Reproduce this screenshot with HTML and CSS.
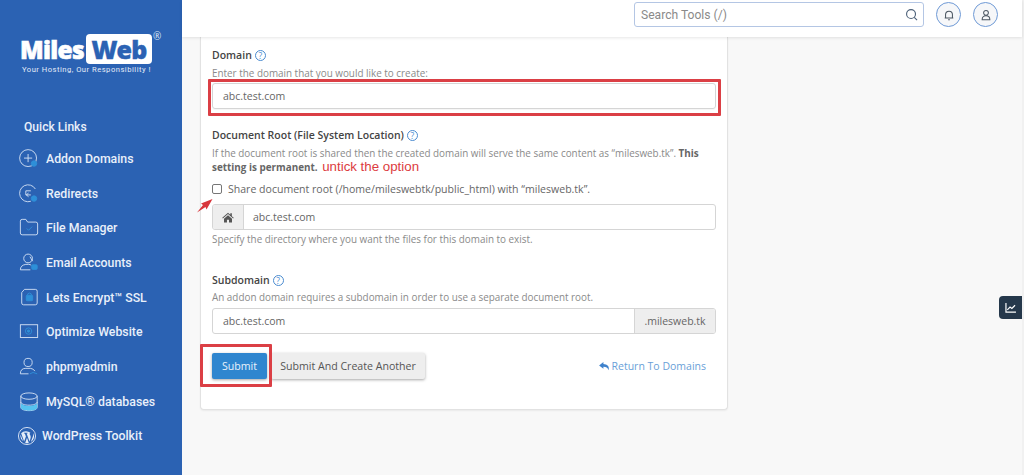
FILE: index.html
```html
<!DOCTYPE html>
<html lang="en">
<head>
<meta charset="utf-8">
<title>Create Addon Domain</title>
<link rel="stylesheet" href="styles.css">
</head>
<body>
<div class="app">
  <aside class="sidebar">
    <div class="logo">
      <div class="logo-mark"><span class="logo-miles">Miles</span><span class="logo-web">Web</span><span class="logo-reg">®</span></div>
      <div class="logo-tag">Your Hosting, Our Responsibility !</div>
    </div>
    <div class="quick">Quick Links</div>
    <nav class="nav">
      <a class="nav-item"><svg class="ico" viewBox="0 0 22 22"><circle cx="10" cy="10" r="9.3"/><path d="M10 5.500v9M5.500 10h9"/><circle class="dot" cx="16.500" cy="16" r="3"/></svg>Addon Domains</a>
      <a class="nav-item"><svg class="ico" viewBox="0 0 22 22"><path d="M18 5.500A9.300 9.300 0 1 0 13 19"/><path d="M13 7.500H7.500v4.500H13M10.500 10l-2.500 2 2.500 2"/><circle class="dot" cx="16.500" cy="16" r="3"/></svg>Redirects</a>
      <a class="nav-item"><svg class="ico" viewBox="0 0 22 22"><path d="M1.500 3.500q0-2 2-2h4l2 3h9q2 0 2 2v10q0 2-2 2h-15q-2 0-2-2z"/><path class="acc" d="M8.500 11.500l2 2 4-4"/></svg>File Manager</a>
      <a class="nav-item"><svg class="ico" viewBox="0 0 22 22"><circle cx="10" cy="6" r="4.800"/><path d="M12 4l3 5M1.500 18.500q0-5 6-6h3q2 0 3 1M1.500 18.500h11"/><rect class="dot" x="14" y="13" width="6" height="5" rx="1"/></svg>Email Accounts</a>
      <a class="nav-item"><svg class="ico" viewBox="0 0 22 22"><path d="M6 1.500h12q2 0 2 2v13q0 2-2 2H5q-2 0-2-2V5z"/><rect class="dot" x="8" y="8" width="7" height="6" rx="1"/><path class="acc" d="M9.500 8V6.500q2-2 4 0V8"/></svg>Lets Encrypt™ SSL</a>
      <a class="nav-item"><svg class="ico" viewBox="0 0 22 22"><rect x="1.500" y="3" width="19" height="14"/><circle class="acc" cx="10.500" cy="10" r="3.500"/><circle class="dot" cx="10.500" cy="10" r="1.300"/></svg>Optimize Website</a>
      <a class="nav-item"><svg class="ico" viewBox="0 0 22 22"><circle cx="10" cy="6" r="4.500"/><path d="M1.500 18.500q0-6 6-6h5q3 0 5 3M1.500 18.500h9"/><path class="acc" d="M12 18.500q3-3 8 0"/></svg>phpmyadmin</a>
      <a class="nav-item"><svg class="ico" viewBox="0 0 22 22"><ellipse class="db" cx="11" cy="4.500" rx="9" ry="3.500"/><path d="M2 4.500v12.500c0 2 4 3.500 9 3.500s9-1.500 9-3.500V4.500"/><path d="M2 11c0 2 4 3.500 9 3.500s9-1.500 9-3.500"/><path class="fill" d="M2 12.500c2 2 5 3 9 3s7-1 9-3V17c0 2-4 3.500-9 3.500S2 19 2 17z"/></svg>MySQL® databases</a>
      <a class="nav-item nav-wp"><svg class="ico-wp" viewBox="0 0 20 20"><circle class="wp-bg" cx="10" cy="10" r="9.500"/><path class="wp-w" d="M3.500 7l3.300 9.200 2-5.700-1.200-3.300-1-.1v-.8h4v.8l-1 .1 3.200 9 1-3.200c.6-2 .3-3-.5-4.300-.5-.8-.5-1.800.5-2.200A7.500 7.500 0 0 0 3.500 7zM10 12l-2 5.800a7.500 7.500 0 0 0 4 0zM16.800 6.600c.3 2 0 3-.5 4.600l-2 5.500a7.500 7.500 0 0 0 2.500-10.100zM2.800 8.500a7.500 7.500 0 0 0 3 7.400z"/></svg>WordPress Toolkit</a>
    </nav>
  </aside>

  <div class="content">
    <header class="topbar">
      <div class="search"><span class="search-text">Search Tools (/)</span>
        <svg class="search-ico" viewBox="0 0 14 14"><circle cx="6.500" cy="6.500" r="4.800"/><path d="M10 10l3 3"/></svg>
      </div>
      <span class="round"><svg viewBox="0 0 14 14"><path d="M3 10.500V6.500a4 4 0 0 1 8 0v4zM2 10.500h10M6 12.500h2"/></svg></span>
      <span class="round"><svg viewBox="0 0 14 14"><circle cx="7" cy="4.500" r="2.800"/><path d="M2.500 12.500q0-4.500 4.500-4.500t4.500 4.500z"/></svg></span>
    </header>

    <main class="main">
      <form class="card">
        <div class="field f-domain">
          <div class="label">Domain <span class="help">?</span></div>
          <div class="hint">Enter the domain that you would like to create:</div>
          <div class="input">abc.test.com</div>
        </div>

        <div class="field f-root">
          <div class="label">Document Root (File System Location) <span class="help">?</span></div>
          <div class="desc">If the document root is shared then the created domain will serve the same content as “milesweb.tk”. <b>This setting is permanent.</b> <span class="note">untick the option</span></div>
          <label class="check"><span class="box"></span>Share document root (/home/mileswebtk/public_html) with “milesweb.tk”.</label>
          <div class="group">
            <span class="addon addon-home"><svg viewBox="0 0 14 12"><path d="M7 0.500L0.300 6.300l.7.800L7 2l6 5.100.7-.8-2.200-1.900V1h-1.800v1.900zM2.300 7.500V11.800h3.500V8.500h2.400v3.300h3.500V7.500L7 3.500z"/></svg></span>
            <span class="group-val">abc.test.com</span>
          </div>
          <div class="hint hint-after">Specify the directory where you want the files for this domain to exist.</div>
        </div>

        <div class="field f-sub">
          <div class="label">Subdomain <span class="help">?</span></div>
          <div class="hint">An addon domain requires a subdomain in order to use a separate document root.</div>
          <div class="group">
            <span class="group-val">abc.test.com</span>
            <span class="addon addon-suffix">.milesweb.tk</span>
          </div>
        </div>

        <div class="actions">
          <button type="button" class="btn btn-primary">Submit</button>
          <button type="button" class="btn btn-default">Submit And Create Another</button>
          <a class="return"><svg viewBox="0 0 12 10"><path d="M4.800 0L0 3.800l4.800 3.800V5.300c3 0 4.700.6 5.700 3.900C11.800 5 9 2.400 4.800 2.300z"/></svg>Return To Domains</a>
        </div>
      </form>
    </main>
  </div>
</div>

<div class="mark mark-domain"></div>
<div class="mark mark-submit"></div>
<svg class="arrow" viewBox="0 0 16 14"><path d="M15.500 0L4 4.500l2 1.500L0 13.500l8.500-5.500 1 2.500z"/></svg>
<div class="tab"><svg viewBox="0 0 12 11"><path d="M1 0v10h11" /><path d="M2.500 7.500l3-3 2 1.500L11 2.500"/></svg></div>
</body>
</html>
```

FILE: styles.css
```css
* { box-sizing: border-box; }
html, body { margin: 0; height: 475px; overflow: hidden; }
body { font-family: "Open Sans", sans-serif; color: #555; background: #f8f8f8; position: relative; }

.app { display: flex; height: 475px; }

/* Sidebar */
.sidebar { width: 182px; flex: none; background: #2b62b3; color: #e9f0fa; font-family: Roboto, sans-serif; padding: 34px 0 0; }
.logo { padding-left: 20px; }
.logo-mark { display: flex; align-items: flex-start; height: 30px; font-family: "Open Sans", sans-serif; font-weight: 800; }
.logo-miles { color: #fff; font-size: 24.500px; line-height: 30px; letter-spacing: -0.7px; margin-top: 1px; width: 66px; -webkit-text-stroke: 0.6px #fff; }
.logo-web { background: #fff; color: #2b62b3; font-size: 25px; line-height: 30px; height: 30px; width: 66px; text-align: center; border-radius: 4px; letter-spacing: -0.8px; -webkit-text-stroke: 0.4px #2b62b3; }
.logo-reg { color: #dce7f6; font-size: 10px; line-height: 10px; font-weight: 400; margin: -3px 0 0 1px; }
.logo-tag { margin: 0 0 0 2px; font-size: 7.600px; line-height: 11px; letter-spacing: 0.5px; color: #e4ecf8; white-space: nowrap; }
.quick { margin: 44px 0 0 24px; font-size: 12.100px; line-height: 16px; font-weight: 500; }
.nav { margin-top: 6.500px; display: flex; flex-direction: column; }
.nav-item { display: flex; align-items: center; height: 34.700px; padding-left: 19px; gap: 7px; font-size: 12.300px; font-weight: 500; white-space: nowrap; }
.nav-wp { padding-left: 18px; gap: 6px; }
.ico { width: 20px; height: 20px; flex: none; fill: none; stroke: #d5e2f5; stroke-width: 1; }
.ico .dot { fill: #2e8fd8; stroke: #2e8fd8; }
.ico .acc { stroke: #2e8fd8; }
.ico .db { stroke: #d5e2f5; }
.ico .fill { fill: #56c3f0; stroke: none; }
.ico-wp { width: 18px; height: 18px; flex: none; }
.wp-bg { fill: #2b62b3; stroke: #e4ecf8; stroke-width: 1; }
.wp-w { fill: #e4ecf8; }

/* Content */
.content { flex: 1; min-width: 0; display: flex; flex-direction: column; border-right: 2px solid #f1f1f1; }
.topbar { height: 37px; flex: none; background: #fff; box-shadow: 0 1px 3px rgba(0,0,0,.1); position: relative; z-index: 1; display: flex; align-items: flex-start; padding: 2px 0 0 452px; }
.search { width: 290px; height: 25px; border: 1px solid #b4c6e4; border-radius: 3px; display: flex; align-items: center; justify-content: space-between; padding: 0 5px 0 6px; font-family: Roboto, sans-serif; font-size: 12.100px; color: #8a8a8a; margin-right: 12px; }
.search-ico { width: 13px; height: 13px; fill: none; stroke: #4c6078; stroke-width: 1.200; }
.round { width: 25px; height: 25px; border-radius: 50%; border: 1px solid #6f9ad6; background: #f6f7f9; display: flex; align-items: center; justify-content: center; margin-right: 12px; }
.round svg { width: 12px; height: 12px; fill: none; stroke: #4a5560; stroke-width: 1.200; }

.main { flex: 1; padding-left: 18px; min-height: 0; }
.card { width: 528px; height: 373px; background: #fff; border: 1px solid #e2e2e2; border-top: 0; border-radius: 0 0 4px 4px; box-shadow: 0 1px 2px rgba(0,0,0,.06); padding: 11px 11px 0; }

.label { display: flex; align-items: center; gap: 3px; height: 14px; font-size: 10.500px; line-height: 14px; font-weight: 600; color: #444; }
.help { width: 11px; height: 11px; flex: none; border: 1px solid #4a8bd0; border-radius: 50%; color: #4a8bd0; font-size: 8.500px; font-weight: 400; line-height: 9px; text-align: center; }
.hint { font-size: 9.900px; line-height: 12px; color: #8a8a8a; margin-top: 5px; white-space: nowrap; }
.hint-after { margin-top: 3px; }
.f-sub .hint { margin-top: 4px; }
.desc { font-size: 9.900px; line-height: 14px; color: #8a8a8a; margin-top: 4px; width: 490px; }
.desc b { color: #666; font-weight: 700; }
.note { font-family: "Liberation Sans", sans-serif; font-size: 13.300px; line-height: 10px; color: #dc3b40; margin-left: 2px; }
.input { height: 26px; margin-top: 4px; width: 504px; border: 1px solid #d5d5d5; border-radius: 3px; font-size: 10.500px; line-height: 25px; padding-left: 10px; color: #666; box-shadow: 0 1px 1px rgba(0,0,0,.04); }
.f-root { margin-top: 19px; }
.f-sub { margin-top: 28px; }

.check { display: flex; align-items: center; font-size: 10.550px; line-height: 14px; color: #666; margin-top: 8px; gap: 6px; white-space: nowrap; }
.box { width: 10px; height: 10px; border: 1px solid #767676; border-radius: 2px; background: #fff; flex: none; }
.group { display: flex; width: 504px; height: 26px; border: 1px solid #d5d5d5; border-radius: 3px; margin-top: 8px; font-size: 10.500px; color: #666; overflow: hidden; }
.f-sub .group { margin-top: 5px; }
.group-val { flex: 1; line-height: 24px; padding-left: 9px; }
.f-sub .group-val { padding-left: 10px; }
.addon { background: #eee; flex: none; display: flex; align-items: center; justify-content: center; }
.addon-home { width: 31px; border-right: 1px solid #d5d5d5; }
.addon-home svg { width: 12px; height: 11px; fill: #555; }
.addon-suffix { width: 81px; border-left: 1px solid #d5d5d5; font-size: 10.500px; color: #666; }

.actions { display: flex; align-items: center; margin-top: 19px; width: 494px; }
.btn { height: 26px; border: 0; border-radius: 2px; font-family: "Open Sans", sans-serif; font-size: 10.600px; padding: 0; box-shadow: 0 1px 3px rgba(0,0,0,.35); }
.btn-primary { width: 55px; background: #2f86cf; color: #e9f2fb; }
.btn-default { width: 154px; background: #eee; color: #555; margin-left: 4px; }
.return { margin-left: auto; display: flex; align-items: center; gap: 2px; font-size: 10.500px; color: #6a9fd8; }
.return svg { width: 11px; height: 9px; fill: #3f82cc; }

/* Annotations and floating items */
.mark { position: absolute; border: 3px solid #db3f45; border-radius: 1px; }
.mark-domain { left: 208px; top: 79px; width: 513px; height: 37px; }
.mark-submit { left: 200px; top: 344px; width: 72px; height: 43px; }
.arrow { position: absolute; left: 197px; top: 199px; width: 16px; height: 14px; fill: #d8363c; }
.tab { position: absolute; left: 999px; top: 296px; width: 23px; height: 23px; background: #25384b; border-radius: 4px 0 0 4px; display: flex; align-items: center; justify-content: center; }
.tab svg { width: 11px; height: 10px; fill: none; stroke: #fff; stroke-width: 1.300; }
```
